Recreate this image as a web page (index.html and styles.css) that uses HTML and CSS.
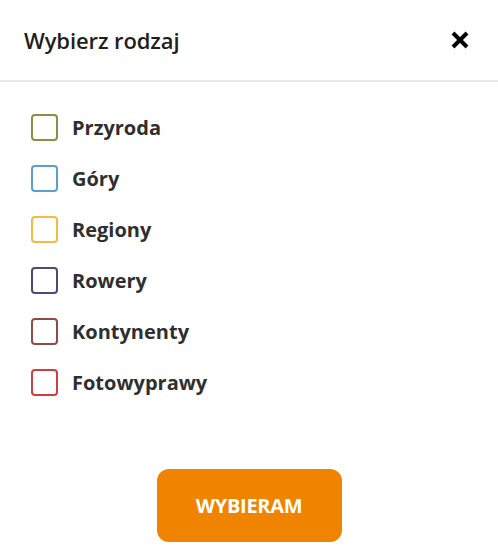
FILE: index.html
```html
<!DOCTYPE html>
<html lang="pl">
<head>
<meta charset="utf-8">
<link rel="stylesheet" href="styles.css">
</head>
<body>
<div class="modal">
  <header class="head">
    <h1 class="title">Wybierz rodzaj</h1>
    <button class="close" aria-label="Zamknij">
      <svg width="20" height="20" viewBox="0 0 20 20"><path d="M3 3 L17 17 M17 3 L3 17" stroke="#000" stroke-width="4" stroke-linecap="butt"/></svg>
    </button>
  </header>
  <ul class="list">
    <li class="item"><span class="box c1"></span><span class="label">Przyroda</span></li>
    <li class="item"><span class="box c2"></span><span class="label">Góry</span></li>
    <li class="item"><span class="box c3"></span><span class="label">Regiony</span></li>
    <li class="item"><span class="box c4"></span><span class="label">Rowery</span></li>
    <li class="item"><span class="box c5"></span><span class="label">Kontynenty</span></li>
    <li class="item"><span class="box c6"></span><span class="label">Fotowyprawy</span></li>
  </ul>
  <div class="foot">
    <button class="submit">WYBIERAM</button>
  </div>
</div>
</body>
</html>
```
FILE: styles.css
```css
* { box-sizing: border-box; }
html, body { margin: 0; padding: 0; background: #fff; }
body { font-family: "Open Sans", "Noto Sans", sans-serif; color: #333; }
.modal { width: 498px; height: 560px; display: flex; flex-direction: column; }
.head {
  height: 82px;
  display: flex; align-items: center; justify-content: space-between;
  padding: 0 28px 0 24px;
  border-bottom: 2px solid #e9e9e9;
}
.title { margin: 0; font-size: 22px; font-weight: 600; color: #1e1e1e; letter-spacing: -0.1px; }
.close { border: 0; background: none; padding: 0; width: 20px; height: 20px; display: flex; cursor: pointer; }
.list { list-style: none; margin: 0; padding: 32px 0 0 31px; display: flex; flex-direction: column; gap: 24px; }
.item { display: flex; align-items: center; gap: 14px; height: 27px; }
.box { width: 27px; height: 27px; border: 2px solid; border-radius: 4px; flex: none; }
.c1 { border-color: #8b8f40; }
.c2 { border-color: #5b9fcf; }
.c3 { border-color: #f4bb3f; }
.c4 { border-color: #4b4a78; }
.c5 { border-color: #8f4c44; }
.c6 { border-color: #cc4040; }
.label { font-size: 20px; font-weight: 700; color: #2f2f2f; letter-spacing: 0; }
.foot { display: flex; justify-content: center; padding-top: 73px; }
.submit {
  width: 185px; height: 73px; border: 0; border-radius: 12px;
  background: #f08300; color: #fff;
  font-family: inherit; font-size: 20px; font-weight: 700; letter-spacing: -0.3px;
}
```
